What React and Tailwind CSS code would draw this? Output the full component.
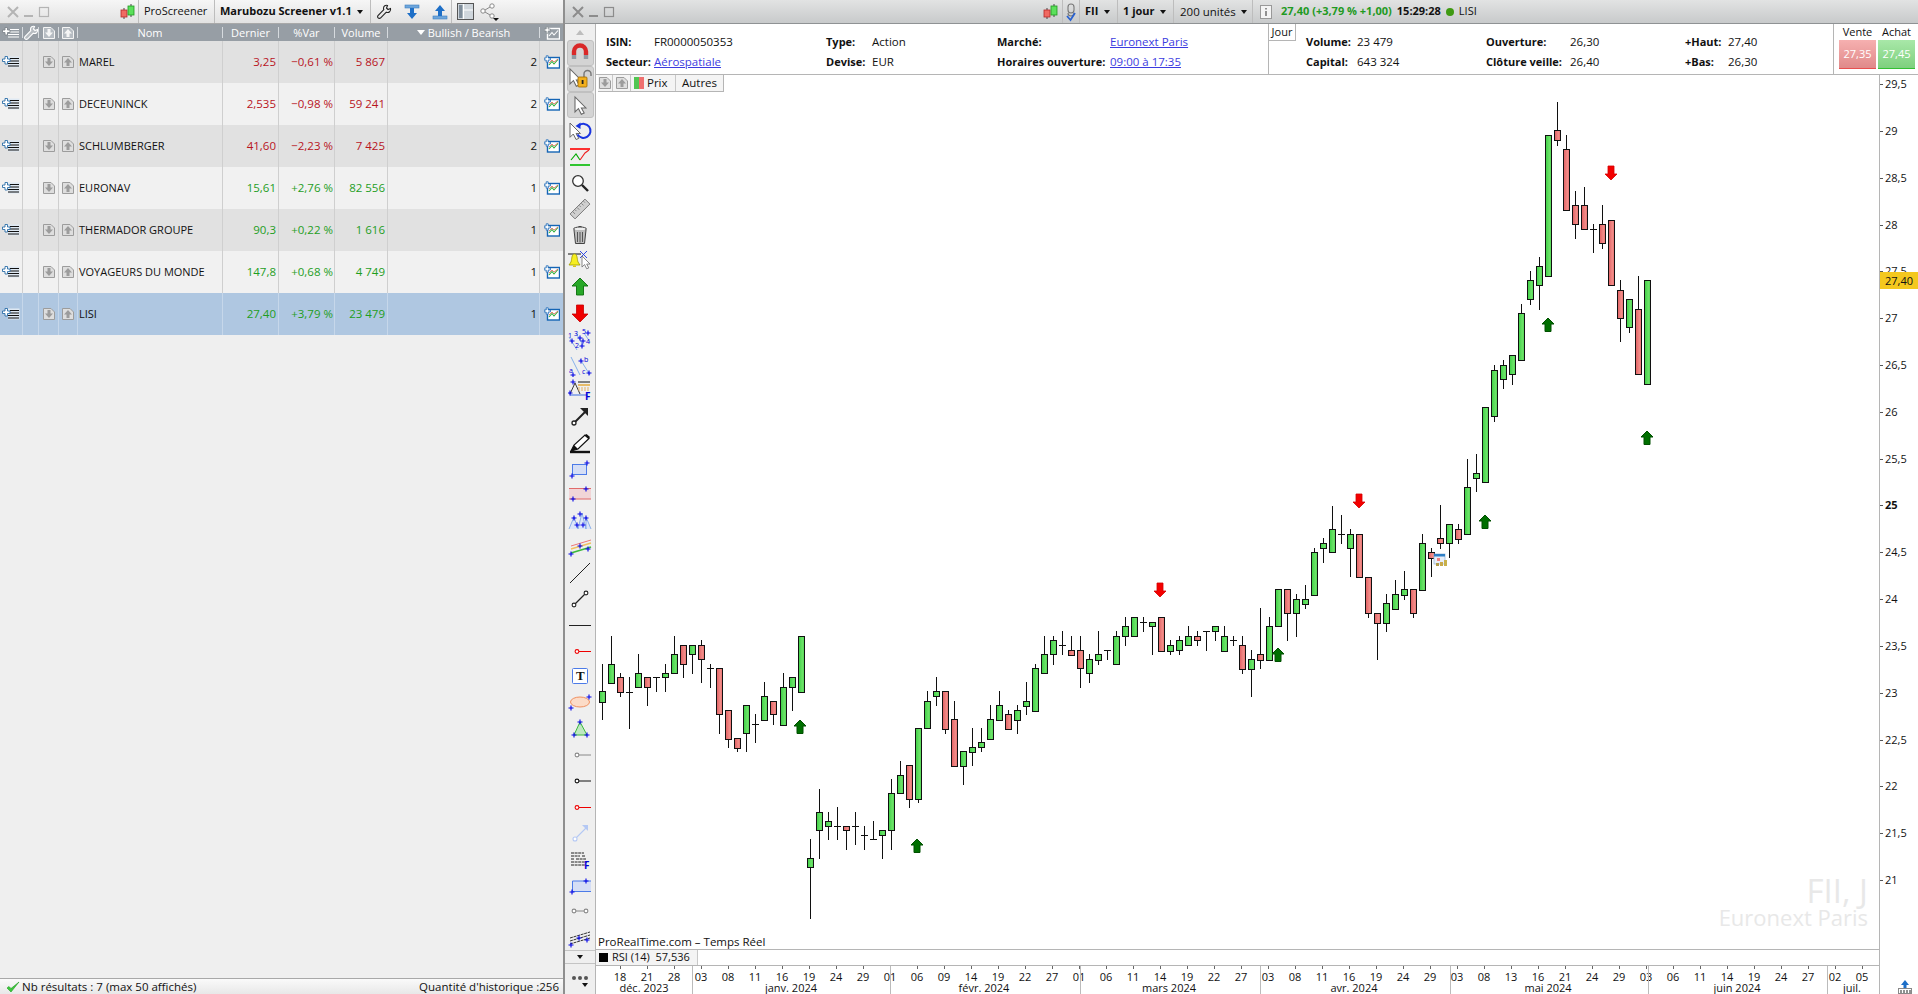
import React from "react";

// candle data: [kind, high, top, bottom, low] in crop coordinates
const A = [
["G",312,394,425,480],["G",228,313,368,368],["R",339,352,395,410],["D",351,395,395,507],["G",282,340,382,382],["R",352,352,382,438],["D",352,352,352,396],["G",312,340,352,396],["G",228,283,340,340],["R",256,256,313,354],["G",256,256,283,342],["R",240,256,298,369],["D",312,325,325,384],["R",325,325,463,522],["R",451,451,536,564],["R",535,535,563,576],["G",436,436,520,576],["D",462,493,493,549],["G",366,409,479,479],["R",424,424,463,495],["G",339,382,494,494],["G",352,352,382,453],["G",229,229,395,395],
["G",838,895,922,1076],["G",688,757,811,896],["G",756,784,799,839],["D",741,799,799,839],["R",799,799,811,870],["D",756,799,799,855],["D",798,826,826,870],["D",783,838,838,838],["G",811,811,826,897],["G",657,700,811,870],["G",603,646,700,700],["R",616,616,716,744],["G",505,505,716,729],["G",393,424,505,505],["G",351,394,409,438],["R",394,394,506,522],["R",423,478,617,617],["G",574,574,617,675],["G",504,562,575,618],["G",504,547,562,576],["G",435,478,536,536],["G",393,436,479,479],["R",450,463,506,506],["G",435,451,479,522],["G",366,424,437,465],["G",312,325,452,452],["G",228,283,340,340],["G",228,241,283,315],["D",213,256,256,285],["R",228,271,284,284],["R",228,271,325,384],["G",282,298,340,369],
];
const B = [
["G",453,523,540,555],["D",511,511,511,540],["G",453,469,553,553],["G",411,439,469,498],["G",412,412,469,469],["D",411,427,427,456],["G",427,427,439,524],["R",412,412,512,512],["G",480,496,512,525],["G",468,481,511,525],["G",438,469,496,496],["R",453,469,481,498],["D",454,454,454,513],["G",438,439,454,483],["G",438,469,512,512],["D",468,481,481,498],["R",468,496,566,582],["G",510,538,566,651],["R",384,523,539,567],["G",411,439,539,539],["G",328,328,439,439],["R",328,328,400,483],["G",343,358,400,471],["G",316,358,371,386],["G",205,217,344,344],["G",175,190,205,249],["G",78,148,217,217],["D",105,163,163,192],["G",148,163,205,291],["R",163,163,290,290],["R",290,290,400,414],["R",400,400,428,540],["G",342,370,428,456],["G",300,343,386,386],["G",273,328,344,360],["R",328,328,400,414],["G",162,190,329,329],["R",205,217,233,291],["R",75,175,190,207],["G",133,133,190,234],["R",133,148,176,192],
];
const C = [
["G",1107,1192,1332,1332],["G",1092,1150,1163,1206],["G",952,952,1177,1177],["G",825,841,979,995],["G",810,826,868,896],["G",796,796,853,884],["G",642,670,811,811],["G",544,571,628,644],["G",501,529,586,660],["G",136,136,559,559],["R",37,121,151,167],
["R",136,178,361,361],["R",303,346,403,447],["R",292,346,418,418],["D",403,418,418,488],["R",345,403,460,476],["R",391,391,586,586],["R",571,601,685,755],["G",628,628,712,728],["R",558,658,853,853],["G",571,571,883,883],
];
const candles = [
  ...A.map((c) => [c[0], ...c.slice(1).map((v) => 560 + v / 3)]),
  ...B.map((c) => [c[0], ...c.slice(1).map((v) => 480 + v / 3)]),
  ...C.map((c) => [c[0], ...c.slice(1).map((v) => 90 + v / 3)]),
];

const prices = [
  ["29,5", 84], ["29", 131], ["28,5", 178], ["28", 225], ["27,5", 271], ["27", 318], ["26,5", 365], ["26", 412], ["25,5", 459], ["25", 505, true], ["24,5", 552], ["24", 599], ["23,5", 646], ["23", 693], ["22,5", 740], ["22", 786], ["21,5", 833], ["21", 880],
];

const dates = "18 21 28 03 08 11 16 19 24 29 01 06 09 14 19 22 27 01 06 11 14 19 22 27 03 08 11 16 19 24 29 03 08 13 16 21 24 29 03 06 11 14 19 24 27 02 05".split(" ");
const months = [["déc. 2023", 644], ["janv. 2024", 791], ["févr. 2024", 984], ["mars 2024", 1169], ["avr. 2024", 1354], ["mai 2024", 1548], ["juin 2024", 1737], ["juil.", 1852]];
const monthSeps = [692, 890, 1080, 1260, 1450, 1648, 1827];

const ups = [[800, 720], [917, 839], [1278, 648], [1485, 515], [1548, 318], [1647, 431]];
const downs = [[1160, 583], [1359, 494], [1611, 166]];

function UpArrow({ x, y }) {
  return <polygon points={`${x},${y} ${x + 6},${y + 6} ${x + 3},${y + 6} ${x + 3},${y + 13.5} ${x - 3},${y + 13.5} ${x - 3},${y + 6} ${x - 6},${y + 6}`} fill="#006f00" stroke="#005000" strokeWidth="1" />;
}
function DownArrow({ x, y }) {
  return <polygon points={`${x - 3},${y} ${x + 3},${y} ${x + 3},${y + 8} ${x + 6},${y + 8} ${x},${y + 14} ${x - 6},${y + 8} ${x - 3},${y + 8}`} fill="#f30000" stroke="#d40000" strokeWidth="0.8" />;
}

function Chart() {
  return (
    <svg viewBox="596 75 1322 874" width="1322" height="874" className="block">
      <defs>
        <linearGradient id="gg" x1="0" x2="1" y1="0" y2="0">
          <stop offset="0" stopColor="#3ccf45" /><stop offset="0.65" stopColor="#6ce268" /><stop offset="1" stopColor="#4fd653" />
        </linearGradient>
        <linearGradient id="rg" x1="0" x2="1" y1="0" y2="0">
          <stop offset="0" stopColor="#e05f62" /><stop offset="0.65" stopColor="#f28c88" /><stop offset="1" stopColor="#e66e6e" />
        </linearGradient>
      </defs>
      {candles.map((c, i) => {
        const cx = Math.round(602.3 + 9.01 * i) + 0.5;
        const [k, hi, top, bot, lo] = c;
        const t = Math.round(top) + 0.5;
        const b = Math.round(bot) + 0.5;
        return (
          <g key={i} shapeRendering="crispEdges" stroke="#101010" strokeWidth="1">
            <line x1={cx} x2={cx} y1={Math.round(hi)} y2={Math.round(lo)} />
            {k === "D" ? (
              <line x1={cx - 3.5} x2={cx + 3.5} y1={t} y2={t} />
            ) : (
              <rect x={cx - 3} y={t} width="6" height={Math.max(b - t, 3)} fill={k === "G" ? "url(#gg)" : "url(#rg)"} />
            )}
          </g>
        );
      })}
      {ups.map(([x, y], i) => <UpArrow key={i} x={x} y={y} />)}
      {downs.map(([x, y], i) => <DownArrow key={i} x={x} y={y} />)}
      <g transform="translate(1434 554)">
        <rect x="0" y="0" width="11" height="10" fill="#e8eef8" stroke="#9cb9dc" strokeWidth="0.8" />
        <rect x="0" y="0" width="11" height="2.5" fill="#2f7fc6" />
        <rect x="3" y="4" width="3" height="3" fill="#f08080" />
        <rect x="2" y="9" width="3" height="3" fill="#b09a4a" />
        <rect x="6" y="8" width="3" height="4" fill="#c8a94a" />
        <rect x="10" y="6" width="3" height="6" fill="#c8b04a" />
      </g>
      <line x1="1879.5" x2="1879.5" y1="75" y2="949" stroke="#b5b5b5" />
      {prices.map(([p, y, bold]) => (
        <g key={p}>
          <line x1="1880" x2="1883" y1={y + 0.5} y2={y + 0.5} stroke="#555" />
          <text x="1885" y={y + 4} fontSize="11" fontWeight={bold ? 700 : 400} fill="#111">{p}</text>
        </g>
      ))}
      <rect x="1880" y="272" width="38" height="17" fill="#f4c81e" />
      <text x="1885" y="284.5" fontSize="11" fill="#111">27,40</text>
    </svg>
  );
}

function DateAxis() {
  return (
    <svg viewBox="596 966 1283 28" width="1283" height="28" className="block">
      {dates.map((d, i) => {
        const x = 620 + 27 * i;
        return (
          <g key={i}>
            <line x1={x + 0.5} x2={x + 0.5} y1="966" y2="969" stroke="#666" />
            <text x={x} y="981" fontSize="11" textAnchor="middle" fill="#111">{d}</text>
          </g>
        );
      })}
      {monthSeps.map((x) => <line key={x} x1={x + 0.5} x2={x + 0.5} y1="966" y2="994" stroke="#bbb" />)}
      {months.map(([m, x]) => <text key={m} x={x} y="992" fontSize="11" textAnchor="middle" fill="#111">{m}</text>)}
    </svg>
  );
}

/* ---------- icons ---------- */
const Ico = ({ w = 24, h = 24, vb, children, className = "" }) => (
  <svg width={w} height={h} viewBox={vb || `0 0 ${w} ${h}`} className={"block shrink-0 " + className}>{children}</svg>
);

const Cursor = ({ x = 0, y = 0, s = 1 }) => (
  <polygon transform={`translate(${x} ${y}) scale(${s})`} points="0,0 0,13 3,10 5.5,15 8,14 5.5,9.5 9.5,9.5" fill="#fff" stroke="#666" strokeWidth="0.9" />
);
const Plus = ({ x, y, c = "#0000e6" }) => (
  <path d={`M${x - 2.5} ${y}H${x + 2.5}M${x} ${y - 2.5}V${y + 2.5}`} stroke={c} strokeWidth="1.1" fill="none" />
);

function CandleIcon() {
  return (
    <Ico w={18} h={18}>
      <path d="M5 5V16M12 1V14" stroke="#444" strokeWidth="1" />
      <rect x="2" y="7" width="6" height="7" fill="#f06a62" stroke="#b52a2a" strokeWidth="0.8" />
      <rect x="9" y="3" width="6" height="9" fill="#5be05b" stroke="#1f9a1f" strokeWidth="0.8" />
    </Ico>
  );
}
function WinButtons({ dark }) {
  const c = dark ? "#8c8c8c" : "#b4b4b4";
  return (
    <div className="flex items-center w-[60px] shrink-0">
      <Ico w={14} h={14} className="ml-[6px]"><path d="M2 2L12 12M12 2L2 12" stroke={c} strokeWidth="2" /></Ico>
      <Ico w={12} h={14} className="ml-[3px]"><path d="M1 11H10" stroke={c} strokeWidth="2" /></Ico>
      <Ico w={12} h={14} className="ml-[3px]"><rect x="1.5" y="2.5" width="9" height="9" fill="none" stroke={c} strokeWidth="1.2" /></Ico>
    </div>
  );
}
const Sep = () => <div className="w-px h-full bg-[#bdbdbd] shrink-0" />;
const Caret = ({ className = "" }) => <span className={"block w-0 h-0 border-x-[3.5px] border-x-transparent border-t-[4px] border-t-[#111] shrink-0 " + className} />;

function AddList({ light }) {
  return (
    <Ico w={18} h={14}>
      {!light && <rect x="6" y="1.5" width="11.5" height="11" fill="#dfe9f3" />}
      <path d="M8 3.5H17M8 6H17M6 8.5H17M6 11H17" stroke={light ? "#fff" : "#111"} strokeWidth="1.1" />
      <path d="M3 1.5H5.5V4H8V6.5H5.5V9H3V6.5H0.5V4H3Z" fill="#fff" stroke={light ? "#7f868c" : "#2b6ea8"} strokeWidth="0.9" />
    </Ico>
  );
}
function BoxArrow({ up, light }) {
  const stroke = light ? "#f5f5f5" : "#9c9c9c";
  return (
    <Ico w={14} h={14}>
      <path d="M1.5 1.5H9L12.5 5V12.5H1.5Z" fill={light ? "#b6bcc2" : "#dedede"} stroke={stroke} strokeWidth="1" />
      {up
        ? <polygon points="7,3 11,7.5 8.5,7.5 8.5,11 5.5,11 5.5,7.5 3,7.5" fill={stroke} />
        : <polygon points="7,11 11,6.5 8.5,6.5 8.5,3 5.5,3 5.5,6.5 3,6.5" fill={stroke} />}
    </Ico>
  );
}
function ChartAdd({ light }) {
  return (
    <Ico w={16} h={14}>
      <rect x="3.5" y="2.5" width="12" height="10.5" fill={light ? "none" : "#fff"} stroke={light ? "#fff" : "#1565b5"} strokeWidth="1.4" />
      <path d="M5 10L8 6.5L10 9L14 4.5" stroke={light ? "#fff" : "#2fae38"} strokeWidth="1.1" fill="none" />
      {!light && <path d="M5 8L8 5L10 7L14 4" stroke="#e04a3a" strokeWidth="0.7" fill="none" />}
      <path d="M2.2 0.8H4.2V3H6.4V5H4.2V7.2H2.2V5H0.2V3H2.2Z" fill="#fff" stroke={light ? "#7f868c" : "#1565b5"} strokeWidth="0.8" />
    </Ico>
  );
}
const Wrench = ({ c = "#222", fill = "none" }) => (
  <Ico w={16} h={16}>
    <path d="M14.5 4.5L12 5.5L10.5 4L11.5 1.5C9.5 0.8 7.5 2 7.5 4.2C7.5 4.8 7.6 5.3 7.8 5.7L2.2 11.3C1.4 12.1 1.4 13.2 2.1 13.9C2.8 14.6 3.9 14.6 4.7 13.8L10.3 8.2C12.7 9.2 15.3 7.2 14.5 4.5Z" fill={fill} stroke={c} strokeWidth="1.1" />
  </Ico>
);
function BlueBar({ down }) {
  return (
    <Ico w={16} h={16}>
      {down ? (
        <>
          <rect x="1" y="1" width="14" height="3" fill="#6ea6dc" stroke="#3d7fc0" strokeWidth="0.6" />
          <polygon points="8,15 13,9 10,9 10,4 6,4 6,9 3,9" fill="#1e6fc7" />
        </>
      ) : (
        <>
          <rect x="1" y="12" width="14" height="3" fill="#6ea6dc" stroke="#3d7fc0" strokeWidth="0.6" />
          <polygon points="8,1 13,7 10,7 10,12 6,12 6,7 3,7" fill="#1e6fc7" />
        </>
      )}
    </Ico>
  );
}

/* toolbar icons */
const tool = {
  magnet: (
    <Ico><path d="M6 14V10.5a6 6 0 0 1 12 0V14" fill="none" stroke="#d92828" strokeWidth="4.4" /><path d="M3.8 14H8.2V18H3.8ZM15.8 14H20.2V18H15.8Z" fill="#8f99a2" /></Ico>
  ),
  lock: (
    <Ico><Cursor x={2} y={2} s={1.15} /><path d="M16 10V7a3.5 3.5 0 0 1 7 0V9" fill="none" stroke="#777" strokeWidth="1.4" /><rect x="10" y="10" width="9" height="10" rx="1" fill="#f2b01e" stroke="#a06a00" strokeWidth="0.8" /><rect x="13.7" y="13" width="1.8" height="4" fill="#222" /></Ico>
  ),
  cursor: <Ico><Cursor x={7} y={4} s={1.15} /></Ico>,
  rotate: (
    <Ico><Cursor x={2} y={4} s={1.1} /><path d="M11 6.5A7 7 0 1 1 9.5 15.5" fill="none" stroke="#1a35e0" strokeWidth="2" /><polygon points="7.5,7 12.5,3.5 12.5,10" fill="#1a35e0" /></Ico>
  ),
  zig: (
    <Ico><path d="M2 4H22" stroke="#f00" strokeWidth="1.6" /><path d="M2 20H22" stroke="#0b0" strokeWidth="1.6" /><path d="M3 15L8 9L12 15" stroke="#0a0" strokeWidth="1.1" fill="none" /><path d="M12 15L17 8L21 5" stroke="#e22" strokeWidth="1.1" fill="none" /></Ico>
  ),
  zoom: (
    <Ico><circle cx="10" cy="10" r="5.3" fill="#fff" stroke="#333" strokeWidth="1.3" /><path d="M14 14L20 20" stroke="#222" strokeWidth="2.4" /></Ico>
  ),
  ruler: (
    <Ico><g transform="rotate(-45 12 12)"><rect x="1.5" y="8.5" width="21" height="7" fill="#d0d0d0" stroke="#777" strokeWidth="0.9" /><path d="M5 9v3M8 9v2M11 9v3M14 9v2M17 9v3M20 9v2" stroke="#777" strokeWidth="0.8" /></g></Ico>
  ),
  trash: (
    <Ico><ellipse cx="12" cy="6" rx="6.5" ry="2" fill="#eee" stroke="#444" strokeWidth="1" /><path d="M6 7L7.5 20.5H16.5L18 7" fill="#bdbdbd" stroke="#444" strokeWidth="1" /><path d="M9.5 9V19M12 9V19.5M14.5 9V19" stroke="#555" strokeWidth="1" /><path d="M10.5 3.5H13.5" stroke="#444" strokeWidth="1" /></Ico>
  ),
  bell: (
    <Ico><path d="M0 5H13" stroke="#111" strokeWidth="1" /><path d="M6.5 5C3.5 5 4 10 3 13L1 16H12L10 13C9 10 9.5 5 6.5 5Z" fill="#f6ee20" stroke="#a09a00" strokeWidth="0.8" /><path d="M5 16.5h3v1.5h-3z" fill="#d8c810" /><path d="M12 2L19 9M19 2L12 9" stroke="#1a35e0" strokeWidth="0.9" /><Cursor x={14} y={7} s={0.85} /></Ico>
  ),
  up: <Ico><polygon points="12,3 20,11 15.5,11 15.5,20 8.5,20 8.5,11 4,11" fill="#28a828" stroke="#0b6e0b" strokeWidth="0.9" /></Ico>,
  down: <Ico><polygon points="12,21 20,13 15.5,13 15.5,4 8.5,4 8.5,13 4,13" fill="#f00000" stroke="#c80000" strokeWidth="0.8" /></Ico>,
  waves: (
    <Ico><path d="M1 10L9 23M8 6L15 18M16 6L22 15" stroke="#6aa0e8" strokeWidth="0.8" /><text x="0" y="11" fontSize="7" fill="#0000d8">1</text><text x="6" y="9" fontSize="7" fill="#0000d8">3</text><text x="14" y="7" fontSize="7" fill="#0000d8">5</text><text x="7" y="21" fontSize="7" fill="#0000d8">2</text><text x="18" y="17" fontSize="7" fill="#0000d8">4</text><Plus x={4} y={14} /><Plus x={12} y={11} /><Plus x={20} y={6} /><Plus x={14} y={19} /><Plus x={15} y={14} /></Ico>
  ),
  abc: (
    <Ico><path d="M3 4L12 22M12 6L22 22" stroke="#6aa0e8" strokeWidth="0.8" /><text x="16" y="9" fontSize="7" fill="#0000d8">b</text><text x="14" y="21" fontSize="7" fill="#0000d8">c</text><text x="1" y="20" fontSize="7" fill="#0000d8">a</text><Plus x={13} y={8} /><Plus x={5} y={22} /><Plus x={21} y={20} /></Ico>
  ),
  fan: (
    <Ico><path d="M7 4L2 15M7 4L12 15" stroke="#222" strokeWidth="0.9" fill="none" /><path d="M10 3H22" stroke="#111" strokeWidth="1" /><path d="M10 6H22" stroke="#e4a020" strokeWidth="1.3" /><path d="M10 9H22M10 11H22" stroke="#e4b060" strokeWidth="1" strokeDasharray="2 1" /><path d="M2 16H20" stroke="#3a6ae0" strokeWidth="1" /><Plus x={5} y={3} /><Plus x={2} y={14} /><text x="17" y="21" fontSize="10" fontWeight="700" fill="#0000d8">F</text></Ico>
  ),
  arrow: (
    <Ico><circle cx="6" cy="18" r="2" fill="#fff" stroke="#222" strokeWidth="1.3" /><path d="M7.5 16.5L17 7" stroke="#222" strokeWidth="2" /><polygon points="20,3 20,11 12,3" fill="#222" /></Ico>
  ),
  pencil: (
    <Ico><path d="M2 21H22" stroke="#111" strokeWidth="2.4" /><path d="M3 20L6 14L17 4L21 7.5L10 18Z" fill="#fff" stroke="#111" strokeWidth="1.2" /><path d="M3 20L6 14L10 18Z" fill="#111" /><path d="M16.5 4.5L20.5 8L22 6L18.5 3Z" fill="#111" /></Ico>
  ),
  rect: (
    <Ico><rect x="4.5" y="7.5" width="14" height="10" fill="#d5def5" stroke="#4c7be8" strokeWidth="1" /><Plus x={19} y={6} /><Plus x={4} y={19} /></Ico>
  ),
  band: (
    <Ico><rect x="1" y="6" width="22" height="10" fill="#f1d5d7" /><path d="M1 5.5H23M1 16H23" stroke="#df5a5a" strokeWidth="0.9" /><Plus x={18} y={6} /><Plus x={5} y={16} /></Ico>
  ),
  tris: (
    <Ico><path d="M1 20L6 8L10 20L14 4L18 20L18 8L23 20" stroke="#7fa8e8" strokeWidth="0.9" fill="#dce6f8" /><Plus x={6} y={9} /><Plus x={12} y={5} /><Plus x={18} y={9} /><Plus x={9} y={16} /><Plus x={15} y={16} /></Ico>
  ),
  channel: (
    <Ico><path d="M3 11L23 5" stroke="#e77" strokeWidth="1" /><path d="M3 14L23 8" stroke="#f0c060" strokeWidth="1.4" /><path d="M3 18L23 12" stroke="#3cb83c" strokeWidth="1.6" /><Plus x={12} y={11} /><Plus x={3} y={19} /><Plus x={20} y={14} /></Ico>
  ),
  line: <Ico><path d="M2 22L22 2" stroke="#222" strokeWidth="1" /></Ico>,
  seg: (
    <Ico><circle cx="6" cy="18" r="1.9" fill="#fff" stroke="#222" strokeWidth="1.1" /><circle cx="18" cy="6" r="1.9" fill="#fff" stroke="#222" strokeWidth="1.1" /><path d="M7.5 16.5L16.5 7.5" stroke="#222" strokeWidth="1.3" /></Ico>
  ),
  hline: <Ico><path d="M1 12.5H23" stroke="#222" strokeWidth="1" /></Ico>,
  redRay: <Ico><circle cx="9" cy="12.5" r="1.9" fill="#fff" stroke="#e00" strokeWidth="1.1" /><path d="M11 12.5H23" stroke="#e00" strokeWidth="1" /></Ico>,
  text: (
    <Ico><rect x="4.5" y="3.5" width="15" height="15" rx="1" fill="#fff" stroke="#4c7be8" strokeWidth="1" /><text x="8" y="15" fontSize="13" fontWeight="700" fontFamily="Liberation Serif" fill="#111">T</text></Ico>
  ),
  ellipse: (
    <Ico><ellipse cx="12" cy="11" rx="9.5" ry="5" fill="#fcdcc8" stroke="#f09060" strokeWidth="1" /><Plus x={21} y={6} /><Plus x={3} y={17} /></Ico>
  ),
  tri: (
    <Ico><polygon points="12,5 6,18 19,18" fill="#bfe8c0" stroke="#3cb83c" strokeWidth="1" /><Plus x={12} y={5} /><Plus x={6} y={18} /><Plus x={19} y={18} /></Ico>
  ),
  greyRay: <Ico><circle cx="9" cy="12" r="1.9" fill="#fff" stroke="#888" strokeWidth="1.1" /><path d="M11 12H23" stroke="#888" strokeWidth="1" /></Ico>,
  blackRay: <Ico><circle cx="9" cy="12" r="1.9" fill="#fff" stroke="#111" strokeWidth="1.1" /><path d="M11 12H23" stroke="#111" strokeWidth="1" /></Ico>,
  blueArrow: (
    <Ico><circle cx="7" cy="18" r="2" fill="#fff" stroke="#b4c8f4" strokeWidth="1.1" /><path d="M8.5 16.5L18 7" stroke="#b4c8f4" strokeWidth="1.1" /><polygon points="20,4 20,10 14,4" fill="#b4c8f4" /></Ico>
  ),
  fibLines: (
    <Ico><path d="M3 6H16M3 9H12M14 9H17M3 12H6M8 12H18M3 15H19M3 18H17" stroke="#222" strokeWidth="1" strokeDasharray="3 0.6" /><text x="16" y="22" fontSize="10" fontWeight="700" fill="#0000d8">F</text></Ico>
  ),
  rectOpen: (
    <Ico><path d="M23 8H4.5V18.5H23" fill="#d5def5" stroke="#4c7be8" strokeWidth="1" /><Plus x={18} y={8} /><Plus x={4} y={19} /></Ico>
  ),
  greySeg: <Ico><circle cx="6" cy="12" r="1.9" fill="#fff" stroke="#888" strokeWidth="1.1" /><circle cx="18" cy="12" r="1.9" fill="#fff" stroke="#888" strokeWidth="1.1" /><path d="M8 12H16" stroke="#888" strokeWidth="1" /></Ico>,
  greyChan: (
    <Ico><path d="M2 13L22 7M2 16L22 10M2 19L22 13" stroke="#333" strokeWidth="1" strokeDasharray="3 0.7" /><Plus x={11} y={13} /><Plus x={3} y={20} /><Plus x={19} y={15} /></Ico>
  ),
};
const toolOrder = ["magnet","lock","cursor","rotate","zig","zoom","ruler","trash","bell","up","down","waves","abc","fan","arrow","pencil","rect","band","tris","channel","line","seg","hline","redRay","text","ellipse","tri","greyRay","blackRay","redRay","blueArrow","fibLines","rectOpen","greySeg","greyChan"];

function Toolbar() {
  return (
    <div className="w-[31px] shrink-0 bg-[#efefef] border-r border-[#b5b5b5] flex flex-col items-center overflow-hidden">
      <div className="h-[16px] w-full flex items-center justify-center">
        <span className="block w-0 h-0 border-x-[4px] border-x-transparent border-b-[5px] border-b-[#bdbdbd]" />
      </div>
      {toolOrder.map((k, i) => (
        <div key={i} className={"h-[26px] w-[27px] flex items-center justify-center rounded-[3px] " + (i < 3 ? "bg-[#d4d4d4] border border-[#c0c0c0]" : "")}>
          {tool[k]}
        </div>
      ))}
      <div className="h-[14px] w-full border-y border-[#c4c4c4] flex items-center justify-center"><Caret /></div>
      <div className="flex-1 flex flex-col items-center justify-center pt-[3px]">
        <Ico w={18} h={6}><circle cx="3" cy="3" r="2" fill="#555" /><circle cx="9" cy="3" r="2" fill="#555" /><circle cx="15" cy="3" r="2" fill="#555" /></Ico>
        <Caret className="mt-[2px] ml-[10px]" />
      </div>
    </div>
  );
}

/* ---------- left panel ---------- */
const rows = [
  ["MAREL", "3,25", "−0,61 %", "5 867", 2, "r"],
  ["DECEUNINCK", "2,535", "−0,98 %", "59 241", 2, "r"],
  ["SCHLUMBERGER", "41,60", "−2,23 %", "7 425", 2, "r"],
  ["EURONAV", "15,61", "+2,76 %", "82 556", 1, "g"],
  ["THERMADOR GROUPE", "90,3", "+0,22 %", "1 616", 1, "g"],
  ["VOYAGEURS DU MONDE", "147,8", "+0,68 %", "4 749", 1, "g"],
  ["LISI", "27,40", "+3,79 %", "23 479", 1, "g"],
];
const gridCols = "grid grid-cols-[23px_16px_20px_19px_145px_56px_56px_53px_152px_23px]";

function LeftPanel() {
  return (
    <div className="w-[563px] shrink-0 flex flex-col h-full">
      <div className="h-[24px] shrink-0 flex items-stretch bg-gradient-to-b from-[#f6f6f6] to-[#e2e2e2] border-b border-[#a8a8a8]">
        <WinButtons />
        <div className="flex-1 flex justify-end items-center pr-[1px]"><CandleIcon /></div>
        <Sep />
        <div className="w-[75px] shrink-0 pl-[5px] flex items-center text-[11px] text-[#111]">ProScreener</div>
        <Sep />
        <div className="w-[155px] shrink-0 pl-[5px] flex items-center text-[11px] font-bold text-[#111]">
          Marubozu Screener v1.1<Caret className="ml-[5px]" />
        </div>
        <Sep />
        <div className="w-[80px] shrink-0 flex items-center pl-[5px] gap-[12px]">
          <Wrench /><BlueBar down /><BlueBar />
        </div>
        <Sep />
        <div className="w-[111px] shrink-0 flex items-center pl-[5px] gap-[6px]">
          <Ico w={17} h={17}><rect x="0.5" y="0.5" width="16" height="16" fill="#cfd6dc" stroke="#555" /><path d="M6.5 1V16M7 7H16" stroke="#fff" strokeWidth="1.2" /><rect x="2" y="2" width="3.5" height="13" fill="#7f8d9a" /></Ico>
          <Ico w={20} h={18}><circle cx="3" cy="8" r="2.2" fill="#fff" stroke="#888" /><circle cx="12" cy="3" r="2.2" fill="#fff" stroke="#888" /><circle cx="12" cy="13" r="2.2" fill="#fff" stroke="#888" /><path d="M5 7L10 4M5 9L10 12" stroke="#888" /><polygon points="13,15 19,15 16,18" fill="#111" /></Ico>
        </div>
      </div>

      <div className={gridCols + " h-[17px] shrink-0 bg-[#979ea5] text-white text-[11px] leading-[17px] items-center"}>
        <div className="border-r border-[#d6dade] h-[11px] flex items-center justify-center"><AddList light /></div>
        <div className="border-r border-[#d6dade] h-[11px] flex items-center justify-center"><Wrench c="#fff" fill="#b8bdc2" /></div>
        <div className="border-r border-[#d6dade] h-[11px] flex items-center justify-center"><BoxArrow light /></div>
        <div className="border-r border-[#d6dade] h-[11px] flex items-center justify-center"><BoxArrow light up /></div>
        <div className="border-r border-[#d6dade] h-[11px] flex items-center justify-center">Nom</div>
        <div className="border-r border-[#d6dade] h-[11px] flex items-center justify-center">Dernier</div>
        <div className="border-r border-[#d6dade] h-[11px] flex items-center justify-center">%Var</div>
        <div className="border-r border-[#d6dade] h-[11px] flex items-center justify-center">Volume</div>
        <div className="border-r border-[#d6dade] h-[11px] flex items-center justify-center gap-[3px]">
          <span className="block w-0 h-0 border-x-[4px] border-x-transparent border-t-[5px] border-t-white" />Bullish / Bearish
        </div>
        <div className="flex items-center justify-center"><ChartAdd light /></div>
      </div>

      {rows.map((r, i) => {
        const selected = i === 6;
        const bg = selected ? "bg-[#afc7e1]" : i % 2 === 0 ? "bg-[#e1e1e1]" : "bg-[#f1f1f1]";
        const color = r[5] === "r" ? "text-[#b8141e]" : "text-[#1e9e1e]";
        const cell = "h-full flex items-center border-r " + (selected ? "border-[#c6d7ea]" : "border-[#cfcfcf]");
        return (
          <div key={r[0]} className={gridCols + " h-[42px] shrink-0 text-[11.5px] " + bg}>
            <div className={cell + " justify-center"}><AddList /></div>
            <div className={cell} />
            <div className={cell + " justify-center"}><BoxArrow /></div>
            <div className={cell + " justify-center"}><BoxArrow up /></div>
            <div className={cell + " pl-[1px] text-[11px] text-[#111]"}>{r[0]}</div>
            <div className={cell + " justify-end pr-[2px] " + color}>{r[1]}</div>
            <div className={cell + " justify-end pr-[1px] " + color}>{r[2]}</div>
            <div className={cell + " justify-end pr-[2px] " + color}>{r[3]}</div>
            <div className={cell + " justify-end pr-[2px] text-[#111]"}>{r[4]}</div>
            <div className="h-full flex items-center justify-center"><ChartAdd /></div>
          </div>
        );
      })}

      <div className="flex-1 bg-[#efefef]" />
      <div className="h-[16px] shrink-0 flex items-center justify-between border-t border-[#a8a8a8] bg-gradient-to-b from-[#fafafa] to-[#e8e8e8] text-[11.5px] text-[#111] pl-[6px] pr-[4px]">
        <div className="flex items-center gap-[2px]">
          <Ico w={14} h={12}><path d="M1 7L5 11L13 1L5 7.5L3 5.5Z" fill="#3cc83c" stroke="#1f9a1f" strokeWidth="0.6" /></Ico>
          <span>Nb résultats : 7 (max 50 affichés)</span>
        </div>
        <span>Quantité d'historique :256</span>
      </div>
    </div>
  );
}

/* ---------- right panel ---------- */
function InfoBar() {
  const link = "text-[#3c3ce0] underline";
  return (
    <div className="h-[51px] shrink-0 flex bg-white border-b border-[#b5b5b5] text-[11.5px] [&_b]:text-[11px] leading-[16px] text-[#111]">
      <div className="w-[672px] shrink-0 flex pl-[10px] pt-[10px]">
        <div className="grid grid-cols-[48px_172px]">
          <b>ISIN:</b><span>FR0000050353</span>
          <b>Secteur:</b><span className={link + " w-fit"}>Aérospatiale</span>
        </div>
        <div className="grid grid-cols-[46px_125px]">
          <b>Type:</b><span>Action</span>
          <b>Devise:</b><span>EUR</span>
        </div>
        <div className="grid grid-cols-[113px_auto]">
          <b>Marché:</b><span className={link + " w-fit"}>Euronext Paris</span>
          <b>Horaires ouverture:</b><span className={link + " w-fit"}>09:00 à 17:35</span>
        </div>
      </div>
      <div className="relative w-[565px] shrink-0 flex pl-[37px] pt-[10px] border-l border-[#b5b5b5]">
        <div className="absolute left-0 top-0 w-[27px] h-[17px] border-r border-b border-[#b5b5b5] text-center bg-white text-[11px]">Jour</div>
        <div className="grid grid-cols-[51px_129px]">
          <b>Volume:</b><span>23 479</span>
          <b>Capital:</b><span>643 324</span>
        </div>
        <div className="grid grid-cols-[84px_115px]">
          <b>Ouverture:</b><span>26,30</span>
          <b>Clôture veille:</b><span>26,40</span>
        </div>
        <div className="grid grid-cols-[43px_50px]">
          <b>+Haut:</b><span>27,40</span>
          <b>+Bas:</b><span>26,30</span>
        </div>
      </div>
      <div className="flex-1 border-l border-[#b5b5b5] pl-[5px] flex gap-[2px] text-[11px]">
        <div className="w-[37px] flex flex-col">
          <div className="h-[16px] text-center">Vente</div>
          <div className="h-[29px] flex items-center justify-center text-white bg-gradient-to-b from-[#f6b0b0] to-[#e08a8a] border-b border-[#e85050]">27,35</div>
        </div>
        <div className="w-[37px] flex flex-col">
          <div className="h-[16px] text-center">Achat</div>
          <div className="h-[29px] flex items-center justify-center text-white bg-gradient-to-b from-[#a8e8a8] to-[#7ed07e] border-b border-[#33c033]">27,45</div>
        </div>
      </div>
    </div>
  );
}

function RightPanel() {
  return (
    <div className="flex-1 min-w-0 flex flex-col h-full">
      <div className="h-[24px] shrink-0 flex items-stretch bg-gradient-to-b from-[#e2e3e3] to-[#c8cacb] border-b border-[#8f9294] text-[11px] text-[#111]">
        <WinButtons dark />
        <div className="flex-1 flex items-center justify-end pr-[2px]"><CandleIcon /></div>
        <Sep />
        <div className="w-[16px] shrink-0 flex items-center justify-center">
          <Ico w={12} h={20}><path d="M3 5a3 3 0 0 1 6 0v3a3 3 0 0 1-6 0Z" fill="none" stroke="#777" strokeWidth="1.1" /><path d="M3 11a3 3 0 0 0 6 0" fill="none" stroke="#777" strokeWidth="1.1" /><path d="M2 14L5.5 18L10 11" fill="none" stroke="#2a62d0" strokeWidth="1.8" /></Ico>
        </div>
        <Sep />
        <div className="w-[37px] shrink-0 pl-[5px] flex items-center font-bold">FII<Caret className="ml-[6px]" /></div>
        <Sep />
        <div className="w-[55px] shrink-0 pl-[5px] flex items-center font-bold">1 jour<Caret className="ml-[5px]" /></div>
        <Sep />
        <div className="w-[78px] shrink-0 pl-[6px] flex items-center text-[11.5px]">200 unités<Caret className="ml-[5px]" /></div>
        <Sep />
        <div className="w-[665px] shrink-0 flex items-center pl-[7px]">
          <Ico w={13} h={14}><rect x="0.5" y="0.5" width="11" height="13" fill="#f4f4f4" stroke="#999" /><path d="M6 3v1.5M6 6v5" stroke="#666" strokeWidth="1.4" /></Ico>
          <span className="ml-[8px] font-bold text-[#1f9a1f]">27,40 (+3,79 % +1,00)</span>
          <span className="ml-[5px] font-bold">15:29:28</span>
          <span className="ml-[5px] w-[8px] h-[8px] rounded-full bg-[#3f9a12]" />
          <span className="ml-[5px]">LISI</span>
        </div>
      </div>
      <div className="flex-1 min-h-0 flex">
        <Toolbar />
        <div className="flex-1 min-w-0 flex flex-col">
          <InfoBar />
          <div className="relative h-[874px] shrink-0 bg-white text-[11.5px] overflow-hidden">
            <Chart />
            <div className="absolute left-[2px] top-0 h-[17px] flex items-stretch bg-[#f4f4f4] border-r border-b border-[#b5b5b5] text-[#111]">
              <div className="w-[15px] flex items-center justify-center border-r border-[#c8c8c8]"><BoxArrow /></div>
              <div className="w-[18px] flex items-center justify-center border-r border-[#c8c8c8]"><BoxArrow up /></div>
              <div className="w-[45px] flex items-center gap-[3px] pl-[3px] border-r border-[#c8c8c8]">
                <span className="flex w-[10px] h-[12px]"><span className="flex-1 bg-[#52c652]" /><span className="flex-1 bg-[#ef7070]" /></span>Prix
              </div>
              <div className="w-[47px] flex items-center justify-center">Autres</div>
            </div>
            <div className="absolute right-[50px] bottom-[21px] text-right text-[#e8e8e8] leading-none">
              <div className="text-[33px]">FII, J</div>
              <div className="text-[22px] -mt-[1px]">Euronext Paris</div>
            </div>
            <div className="absolute left-[2px] bottom-[0px] text-[#111] leading-[14px]">ProRealTime.com – Temps Réel</div>
          </div>
          <div className="h-[17px] shrink-0 flex w-[1284px] border-y border-[#b5b5b5] border-r text-[11px] text-[#111]">
            <div className="w-[102px] flex items-center bg-[#f4f4f4] border-r border-[#c8c8c8] pl-[3px] gap-[4px]">
              <span className="w-[9px] h-[9px] bg-black" /><span>RSI (14)&nbsp; 57,536</span>
            </div>
          </div>
          <div className="flex-1 flex">
            <div className="w-[1284px] border-r border-[#b5b5b5]"><DateAxis /></div>
            <div className="flex-1 flex items-end justify-end pr-[5px]">
              <Ico w={16} h={14}><path d="M8 0L12 5H9.5V8H6.5V5H4Z" fill="#1e6fc7" /><rect x="1.5" y="8.5" width="13" height="5" fill="#fff" stroke="#888" /><path d="M4 10V13M7 10V13M10 10V13M13 10V13" stroke="#222" /></Ico>
            </div>
          </div>
        </div>
      </div>
    </div>
  );
}

export default function App() {
  return (
    <div className="w-[1918px] h-[994px] flex bg-white overflow-hidden font-['Open_Sans',sans-serif]">
      <LeftPanel />
      <div className="w-[2px] shrink-0 bg-[#8f8f8f]" />
      <RightPanel />
    </div>
  );
}
